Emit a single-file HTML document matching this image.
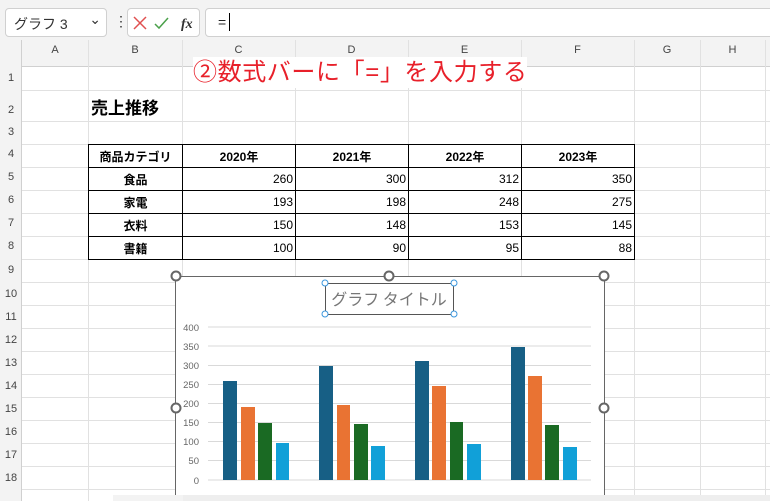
<!DOCTYPE html><html><head><meta charset="utf-8"><style>
*{margin:0;padding:0;box-sizing:border-box}
body{width:770px;height:501px;overflow:hidden;background:#fff;position:relative;font-family:"Liberation Sans","Noto Sans CJK JP",sans-serif}
.a{position:absolute}
.hl{position:absolute;left:22px;right:0;height:1px;background:#e1e1e1}
.vl{position:absolute;top:40px;bottom:0;width:1px;background:#e1e1e1}
.ch{position:absolute;top:44px;font-size:11px;color:#444;text-align:center}
.rh{position:absolute;left:0;width:22px;font-size:11px;color:#444;text-align:center}
td{border:1px solid #000;font-size:12px;height:23px;padding:0 2px}
</style></head><body>
<div class="a" style="left:0;top:0;width:770px;height:40px;background:#f3f3f3"></div>
<div class="a" style="left:5px;top:8px;width:102px;height:29px;background:#fff;border:1px solid #d0d0d0;border-radius:4px;font-size:14px;color:#333;padding:5px 8px">グラフ 3<span style="position:absolute;right:5px;top:2px;font-size:14px">&#8964;</span></div>
<div class="a" style="left:114px;top:13px;font-size:14px;color:#333">&#8942;</div>
<div class="a" style="left:127px;top:8px;width:73px;height:29px;background:#fff;border:1px solid #d0d0d0;border-radius:4px"></div>
<svg class="a" style="left:133px;top:15px" width="60" height="16"><path d="M1 2l12 12M13 2L1 14" stroke="#e05050" stroke-width="1.5"/><path d="M22 9l4 4 9-10" stroke="#4aa04a" stroke-width="1.5" fill="none"/><text x="48" y="13" font-family="Liberation Serif" font-style="italic" font-weight="bold" font-size="14" fill="#333">fx</text></svg>
<div class="a" style="left:205px;top:8px;width:570px;height:29px;background:#fff;border:1px solid #d0d0d0;border-radius:4px"></div>
<div class="a" style="left:218px;top:14px;font-size:14px;color:#222">=</div>
<div class="a" style="left:229px;top:13px;width:1px;height:18px;background:#000"></div>
<div class="a" style="left:203px;top:41px;width:63px;height:5px;background:#e8202a;border-radius:3px"></div>
<div class="a" style="left:0;top:40px;width:770px;height:27px;background:#f3f3f3;border-bottom:1px solid #d0d0d0"></div>
<div class="a" style="left:0;top:40px;width:22px;height:461px;background:#f3f3f3;border-right:1px solid #d0d0d0"></div>
<div class="ch" style="left:22px;width:66px">A</div><div class="ch" style="left:88px;width:94px">B</div><div class="ch" style="left:182px;width:113px">C</div><div class="ch" style="left:295px;width:113px">D</div><div class="ch" style="left:408px;width:113px">E</div><div class="ch" style="left:521px;width:113px">F</div><div class="ch" style="left:634px;width:66px">G</div><div class="ch" style="left:700px;width:65px">H</div>
<div class="vl" style="left:88px"></div><div class="vl" style="left:182px"></div><div class="vl" style="left:295px"></div><div class="vl" style="left:408px"></div><div class="vl" style="left:521px"></div><div class="vl" style="left:634px"></div><div class="vl" style="left:700px"></div><div class="vl" style="left:765px"></div>
<div class="hl" style="top:90px"></div><div class="hl" style="top:121px"></div><div class="hl" style="top:144px"></div><div class="hl" style="top:167px"></div><div class="hl" style="top:190px"></div><div class="hl" style="top:213px"></div><div class="hl" style="top:236px"></div><div class="hl" style="top:259px"></div><div class="hl" style="top:282px"></div><div class="hl" style="top:305px"></div><div class="hl" style="top:328px"></div><div class="hl" style="top:351px"></div><div class="hl" style="top:374px"></div><div class="hl" style="top:397px"></div><div class="hl" style="top:420px"></div><div class="hl" style="top:443px"></div><div class="hl" style="top:466px"></div><div class="hl" style="top:489px"></div>
<div class="rh" style="top:72px">1</div><div class="rh" style="top:104px">2</div><div class="rh" style="top:126px">3</div><div class="rh" style="top:148px">4</div><div class="rh" style="top:171px">5</div><div class="rh" style="top:194px">6</div><div class="rh" style="top:217px">7</div><div class="rh" style="top:240px">8</div><div class="rh" style="top:264px">9</div><div class="rh" style="top:288px">10</div><div class="rh" style="top:311px">11</div><div class="rh" style="top:334px">12</div><div class="rh" style="top:357px">13</div><div class="rh" style="top:380px">14</div><div class="rh" style="top:403px">15</div><div class="rh" style="top:426px">16</div><div class="rh" style="top:449px">17</div><div class="rh" style="top:472px">18</div>
<div class="a" style="left:193px;top:57px;font-size:24px;color:#e8202a;background:#fff;line-height:31px;letter-spacing:0.6px">②数式バーに「=」を入力する</div>
<div class="a" style="left:91px;top:94px;font-size:17px;font-weight:bold">売上推移</div>
<table class="a" style="left:88px;top:144px;border-collapse:collapse;width:547px">
<tr style="font-weight:bold"><td style="width:94px;text-align:center;font-weight:bold">商品カテゴリ</td><td style="width:113px;text-align:center;font-weight:bold">2020年</td><td style="width:113px;text-align:center;font-weight:bold">2021年</td><td style="width:113px;text-align:center;font-weight:bold">2022年</td><td style="text-align:center;font-weight:bold">2023年</td></tr>
<tr><td style="text-align:center;font-weight:bold">食品</td><td align="right">260</td><td align="right">300</td><td align="right">312</td><td align="right">350</td></tr>
<tr><td style="text-align:center;font-weight:bold">家電</td><td align="right">193</td><td align="right">198</td><td align="right">248</td><td align="right">275</td></tr>
<tr><td style="text-align:center;font-weight:bold">衣料</td><td align="right">150</td><td align="right">148</td><td align="right">153</td><td align="right">145</td></tr>
<tr><td style="text-align:center;font-weight:bold">書籍</td><td align="right">100</td><td align="right">90</td><td align="right">95</td><td align="right">88</td></tr>
</table>
<svg class="a" style="left:0;top:0" width="770" height="501">
<rect x="175.5" y="276.5" width="429" height="240" fill="#fff" stroke="#666"/>
<g stroke="#d9d9d9"><line x1="208" x2="591" y1="327" y2="327"/><line x1="208" x2="591" y1="346" y2="346"/><line x1="208" x2="591" y1="365.5" y2="365.5"/><line x1="208" x2="591" y1="384.5" y2="384.5"/><line x1="208" x2="591" y1="403.5" y2="403.5"/><line x1="208" x2="591" y1="422.5" y2="422.5"/><line x1="208" x2="591" y1="441.5" y2="441.5"/><line x1="208" x2="591" y1="460.5" y2="460.5"/><line x1="208" x2="591" y1="480" y2="480"/></g>
<g font-size="9.5" fill="#666" text-anchor="end"><text x="199" y="331">400</text><text x="199" y="350">350</text><text x="199" y="369">300</text><text x="199" y="388">250</text><text x="199" y="407">200</text><text x="199" y="426">150</text><text x="199" y="445">100</text><text x="199" y="464">50</text><text x="199" y="484">0</text></g>
<g fill="#175f85"><rect x="223" y="381" width="14" height="99"/><rect x="319" y="366" width="14" height="114"/><rect x="415" y="361" width="14" height="119"/><rect x="511" y="347" width="14" height="133"/></g>
<g fill="#e97333"><rect x="241" y="407" width="14" height="73"/><rect x="337" y="405" width="13" height="75"/><rect x="432" y="386" width="14" height="94"/><rect x="528" y="376" width="14" height="104"/></g>
<g fill="#1a6a23"><rect x="258" y="423" width="14" height="57"/><rect x="354" y="424" width="14" height="56"/><rect x="450" y="422" width="13" height="58"/><rect x="545" y="425" width="14" height="55"/></g>
<g fill="#11a0d8"><rect x="276" y="443" width="13" height="37"/><rect x="371" y="446" width="14" height="34"/><rect x="467" y="444" width="14" height="36"/><rect x="563" y="447" width="14" height="33"/></g>
<rect x="325.5" y="283.5" width="128" height="31" fill="none" stroke="#555"/>
<text x="389" y="305" font-size="16" fill="#777" text-anchor="middle" font-family="Noto Sans CJK JP">グラフ タイトル</text>
<g fill="#fff" stroke="#3a96dd"><circle cx="325" cy="283" r="3"/><circle cx="454" cy="283" r="3"/><circle cx="325" cy="314" r="3"/><circle cx="454" cy="314" r="3"/></g>
<g fill="#fff" stroke="#666" stroke-width="2"><circle cx="176" cy="276" r="4.5"/><circle cx="389" cy="276" r="4.5"/><circle cx="604" cy="276" r="4.5"/><circle cx="176" cy="408" r="4.5"/><circle cx="604" cy="408" r="4.5"/></g>
<rect x="182" y="495" width="588" height="6" fill="#eee"/><rect x="113" y="495" width="70" height="6" fill="#f3f3f3"/>
</svg>
</body></html>
